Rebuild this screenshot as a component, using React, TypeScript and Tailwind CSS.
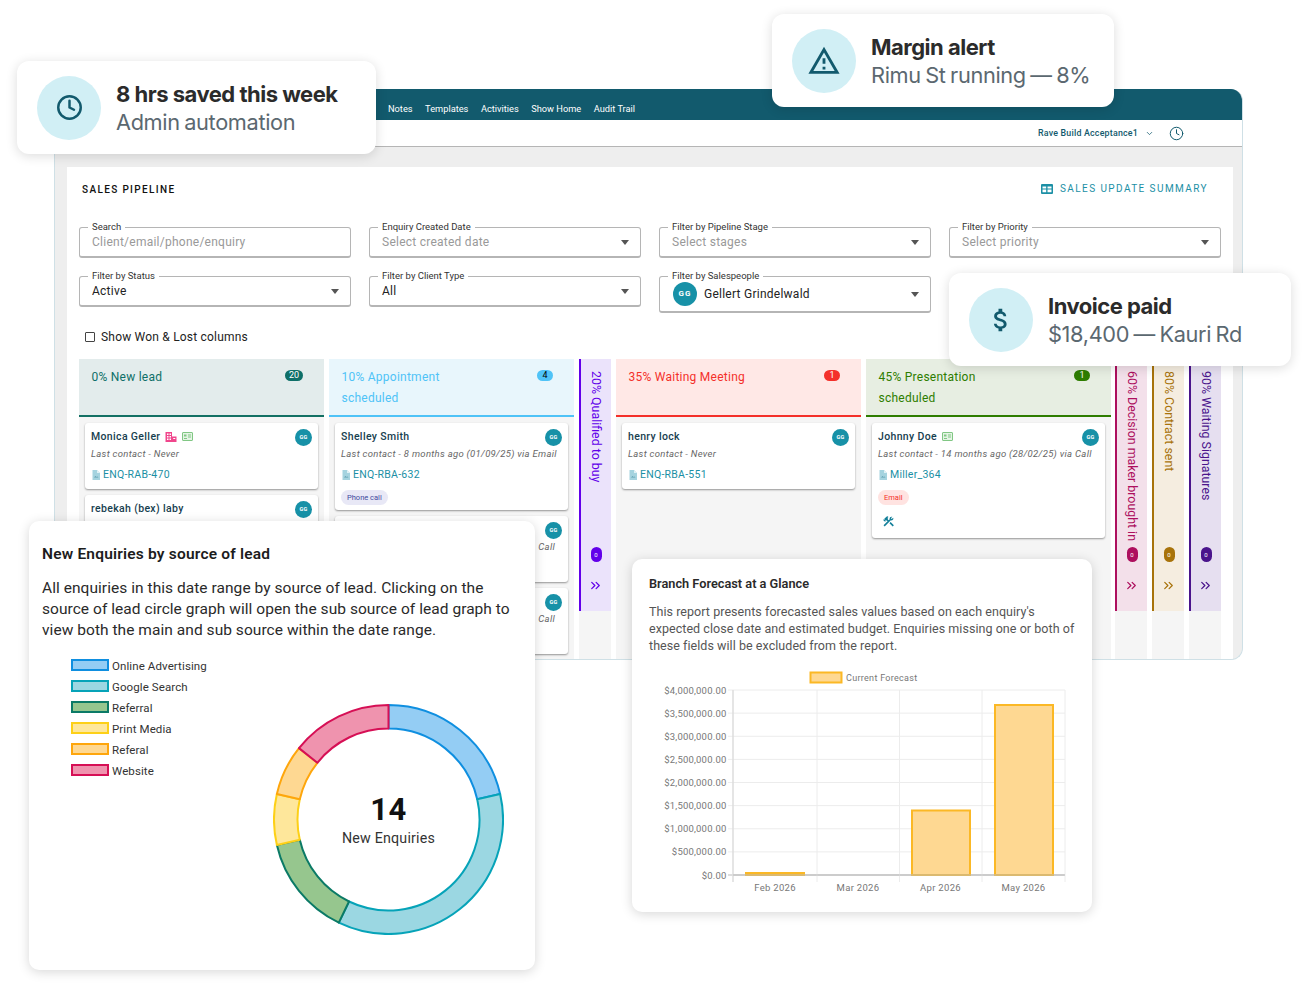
import React from "react";
import { Clock, ChevronDown, ChevronsRight } from "lucide-react";
import { MdOutlineWarningAmber, MdAttachMoney, MdConstruction } from "react-icons/md";

const F = { fontFamily: '"Roboto", "Liberation Sans", sans-serif' };

function Toast({ cls, icon, title, sub }: { cls: string; icon: React.ReactNode; title: string; sub: string }) {
  return (
    <div className={`absolute z-20 flex items-center h-[93px] bg-white rounded-[12px] shadow-[0_2px_12px_rgba(0,0,0,0.14)] pl-[20px] gap-[15px] ${cls}`} style={{ fontFamily: '"Inter", sans-serif' }}>
      <div className="w-[64px] h-[64px] rounded-full bg-[#d1eff5] flex items-center justify-center text-[#125a6d] shrink-0">{icon}</div>
      <div>
        <div className="text-[22px] leading-[29px] font-bold tracking-[-0.5px] text-[#2b2b2b]">{title}</div>
        <div className="text-[21.75px] leading-[26px] tracking-[-0.35px] [word-spacing:-1.3px] text-[#5b6870]">{sub}</div>
      </div>
    </div>
  );
}

function Field({ label, value, ph, caret = true, tall }: { label: string; value?: string; ph?: boolean; caret?: boolean; tall?: boolean }) {
  return (
    <div className={`relative border border-[#b5b5b5] border-b-2 rounded-[3px] flex items-center pl-[12px] pr-[11px] ${tall ? "h-[37px] pl-[13px]" : "h-[31px]"}`}>
      <span className="absolute -top-[7px] left-[8px] px-[4px] bg-white text-[9.5px] leading-[11px] text-[#333]">{label}</span>
      {tall && <span className="w-[24px] h-[24px] rounded-full bg-[#1791a7] text-white text-[8px] font-bold tracking-[1px] flex items-center justify-center mr-[7px]">GG</span>}
      <span className={`text-[12px] tracking-[0.25px] flex-1 ${ph ? "text-[#999]" : "text-[#222]"}`}>{value}</span>
      {caret && <span className="w-0 h-0 border-l-[4px] border-r-[4px] border-t-[5px] border-l-transparent border-r-transparent border-t-[#555] mt-[1px]" />}
    </div>
  );
}

function Gg() {
  return <span className="w-[17px] h-[17px] rounded-full bg-[#1791a7] text-white text-[5.5px] font-bold flex items-center justify-center tracking-[0.3px] shrink-0">GG</span>;
}

function BuildingIcon() {
  return (
    <svg width="12" height="10" viewBox="0 0 24 20" fill="#f0468c">
      <path d="M1 0h13v20H1zM14 9h9v11h-9z" />
      <path fill="#fff" d="M4 3h3v3H4zM9 3h3v3H9zM4 8h3v3H4zM9 8h3v3H9zM4 13h3v3H4zM9 13h3v3H9zM16.500 12h4v2h-4z" />
    </svg>
  );
}
function ContactIcon() {
  return (
    <svg width="11" height="9" viewBox="0 0 22 18" fill="#e4f4e4" stroke="#81c784" strokeWidth="2">
      <rect x="1" y="1" width="20" height="16" rx="1" />
      <rect x="4" y="5" width="5" height="4" fill="#81c784" stroke="none" />
      <path d="M4 13h6M12 6h6M12 10h6" fill="none" />
    </svg>
  );
}
function DocIcon() {
  return (
    <svg width="8" height="10" viewBox="0 0 16 20" fill="#a5d3df" className="shrink-0">
      <path d="M1 0h9l6 6v14H1z" />
      <path d="M10 0l6 6h-6z" fill="#e0f1f5" />
      <path d="M4 15l3-3 2 2 2-1 2 2z" fill="#5f9fb0" />
    </svg>
  );
}

function PCard({ name, icons, last, ref_, tag, tool, h }: { name: string; icons?: React.ReactNode; last?: string; ref_?: string; tag?: React.ReactNode; tool?: boolean; h?: string }) {
  return (
    <div className={`relative bg-white rounded-[3px] shadow-[0_1px_2px_rgba(0,0,0,0.4)] px-[6px] pt-[6px] shrink-0 ${h ?? "h-[66px]"}`}>
      <div className="flex items-center h-[15px] pr-[20px] gap-[5px]">
        <span className="text-[10.5px] font-medium tracking-[0.35px] text-[#17404f]">{name}</span>
        {icons}
      </div>
      <span className="absolute top-[6px] right-[6px]"><Gg /></span>
      {last && <div className="mt-[3px] text-[9.5px] leading-[14px] italic tracking-[0.3px] text-[#666] whitespace-nowrap">{last}</div>}
      {ref_ && (
        <div className="mt-[7px] flex items-center gap-[3px] pl-[1px] text-[10.5px] leading-[14px] tracking-[0.25px] text-[#1b8fa5]">
          <DocIcon />{ref_}
        </div>
      )}
      {tag && <div className="mt-[1px]">{tag}</div>}
      {tool && <div className="mt-[8px] pl-[4px] text-[#137f99]"><MdConstruction size={13} /></div>}
    </div>
  );
}

function CutCard() {
  return (
    <div className="relative bg-white rounded-[3px] shadow-[0_1px_2px_rgba(0,0,0,0.4)] shrink-0 h-[66px]">
      <span className="absolute top-[6px] right-[6px]"><Gg /></span>
      <div className="absolute top-[24px] right-[13px] text-[9.5px] leading-[14px] italic tracking-[0.3px] text-[#666]">Call</div>
    </div>
  );
}

function WideCol({ title, count, head, text, line, badge, badgeText, children }: { title: React.ReactNode; count: string; head: string; text: string; line: string; badge: string; badgeText: string; children?: React.ReactNode }) {
  return (
    <div className="w-[245px] shrink-0 bg-[#f5f5f5] flex flex-col">
      <div className={`h-[58px] shrink-0 border-b-2 pl-[12.5px] pr-[21px] pt-[8px] flex justify-between items-start ${head} ${line}`}>
        <div className={`text-[12px] leading-[21px] tracking-[0.25px] ${text}`}>{title}</div>
        <span className={`mt-[3px] min-w-[16px] h-[11px] px-[4px] rounded-full text-[9px] leading-[11px] text-center ${badge} ${badgeText}`}>{count}</span>
      </div>
      <div className="px-[6px] pt-[6px] flex flex-col gap-[6px]">{children}</div>
    </div>
  );
}

function NarrowCol({ title, bg, text, line, badge }: { title: string; bg: string; text: string; line: string; badge: string }) {
  return (
    <div className="w-[32px] shrink-0 bg-[#f5f5f5]">
      <div className={`h-[252px] border-l-2 flex flex-col items-center pt-[12px] ${bg} ${line}`}>
        <div className={`text-[12.4px] leading-[16px] whitespace-nowrap h-[172px] [writing-mode:vertical-rl] ${text}`}>{title}</div>
        <span className={`mt-[4px] w-[11px] h-[15px] rounded-full text-white text-[6px] flex items-center justify-center ${badge}`}>0</span>
        <ChevronsRight size={15} strokeWidth={2} className={`mt-[16px] -ml-[1px] ${text}`} />
      </div>
    </div>
  );
}

function Donut() {
  const cx = 115.5, cy = 115.5, R = 114.5, r = 91;
  const segs = [
    [3, "#94cdf4", "#0f8fe0"],
    [5, "#9bd7e2", "#06a3b8"],
    [2, "#96c68e", "#0b7a66"],
    [1, "#fee79b", "#fdd017"],
    [1, "#fed892", "#fea60c"],
    [2, "#ef93ae", "#d60f55"],
  ] as const;
  let a = 0;
  const p = (rad: number, deg: number) => {
    const t = (deg * Math.PI) / 180;
    return `${(cx + rad * Math.sin(t)).toFixed(2)} ${(cy - rad * Math.cos(t)).toFixed(2)}`;
  };
  return (
    <svg width="231" height="231" viewBox="0 0 231 231">
      {segs.map(([v, f, s], i) => {
        const a0 = a, a1 = a + (v / 14) * 360;
        a = a1;
        const large = a1 - a0 > 180 ? 1 : 0;
        return <path key={i} fill={f} stroke={s} strokeWidth="2" strokeLinejoin="round" d={`M${p(R, a0)} A${R} ${R} 0 ${large} 1 ${p(R, a1)} L${p(r, a1)} A${r} ${r} 0 ${large} 0 ${p(r, a0)} Z`} />;
      })}
    </svg>
  );
}

function Chart() {
  const ticks = ["$4,000,000.00", "$3,500,000.00", "$3,000,000.00", "$2,500,000.00", "$2,000,000.00", "$1,500,000.00", "$1,000,000.00", "$500,000.00", "$0.00"];
  const xs = [101, 185, 267.5, 350, 433];
  const top = 23, base = 208;
  const months = [["Feb 2026", 143], ["Mar 2026", 226], ["Apr 2026", 308.5], ["May 2026", 391.5]] as const;
  const bars = [[114, 206, 58], [280, 143.5, 58], [363, 38, 58]];
  return (
    <svg width="460" height="240" viewBox="0 0 460 240" style={F}>
      <rect x="178.5" y="5.5" width="31" height="10" fill="#fed892" stroke="#fbb825" strokeWidth="2" />
      <text x="214" y="14" fontSize="9" letterSpacing="0.3" fill="#777">Current Forecast</text>
      {ticks.map((t, i) => {
        const y = top + (i * (base - top)) / 8;
        return (
          <g key={t}>
            <line x1={96} x2={433} y1={y} y2={y} stroke={i === 8 ? "#bbb" : "#ececec"} />
            <text x="94.500" y={y + 3.5} fontSize="9.5" textAnchor="end" letterSpacing="0.2" fill="#777">{t}</text>
          </g>
        );
      })}
      {xs.map((x, i) => <line key={x} x1={x} x2={x} y1={top} y2={base + 7} stroke={i === 0 ? "#ddd" : "#ececec"} strokeWidth={i === 0 ? 1.5 : 1} />)}
      {bars.map(([x, y, w]) => <rect key={x} x={x} y={y} width={w} height={base - y} fill="#fed892" stroke="#fbb825" strokeWidth="2" />)}
      <line x1={101} x2={433} y1={base} y2={base} stroke="#bbb" />
      {months.map(([m, x]) => <text key={m} x={x} y="224" fontSize="9.5" textAnchor="middle" letterSpacing="0.3" fill="#777">{m}</text>)}
    </svg>
  );
}

export default function App() {
  const legend = [
    ["Online Advertising", "bg-[#94cdf4] border-[#0f8fe0]"],
    ["Google Search", "bg-[#9bd7e2] border-[#06a3b8]"],
    ["Referral", "bg-[#96c68e] border-[#0b7a66]"],
    ["Print Media", "bg-[#fee79b] border-[#fdd017]"],
    ["Referal", "bg-[#fed892] border-[#fea60c]"],
    ["Website", "bg-[#ef93ae] border-[#d60f55]"],
  ];
  return (
    <div className="relative w-[1308px] h-[984px] bg-white overflow-hidden pt-[89px] pl-[54px]" style={F}>
      {/* App window */}
      <div className="w-[1189px] h-[571px] bg-[#eeeeee] rounded-[12px] overflow-hidden border-l border-r border-b border-[#cfe0e6] flex flex-col">
        <div className="h-[31px] shrink-0 bg-[#125a6d] flex items-center pl-[333px] gap-[12.5px] text-white text-[9.25px] pt-[8px]">
          <span>Notes</span><span>Templates</span><span>Activities</span><span>Show Home</span><span>Audit Trail</span>
        </div>
        <div className="h-[27px] shrink-0 bg-white border-b border-[#b5b5b5] flex items-center justify-end pt-[1px] pr-[58px] text-[#125a6d]">
          <span className="text-[8.85px] font-medium tracking-[0.2px]">Rave Build Acceptance1</span>
          <ChevronDown size={9} className="ml-[7px]" />
          <Clock size={15} strokeWidth={1.6} className="ml-[15px]" />
        </div>
        <div className="flex-1 min-h-0 pt-[20px] pl-[12px] pr-[9px]">
          <div className="bg-white h-full overflow-hidden px-[12px]">
            <div className="h-[60px] flex items-start justify-between pl-[3px] pr-[13px] pt-[15px]">
              <span className="text-[10px] leading-[13px] font-medium tracking-[1.35px] text-[#111] mt-[1px]">SALES PIPELINE</span>
              <span className="flex items-center gap-[7px] text-[10px] leading-[13px] tracking-[1.42px] text-[#1b8fa5]">
                <svg width="12" height="10" viewBox="0 0 12 10" fill="#1b8fa5"><path d="M1 0h10a1 1 0 0 1 1 1v8a1 1 0 0 1-1 1H1a1 1 0 0 1-1-1V1a1 1 0 0 1 1-1zm.5 2.500v2h3.700v-2zm5 0v2h4v-2zm-5 3v2.800h3.700V5.500zm5 0v2.800h4V5.500z"/></svg>
                SALES UPDATE SUMMARY
              </span>
            </div>
            <div className="grid grid-cols-4 gap-x-[18px] gap-y-[18px] items-start">
              <Field label="Search" value="Client/email/phone/enquiry" ph caret={false} />
              <Field label="Enquiry Created Date" value="Select created date" ph />
              <Field label="Filter by Pipeline Stage" value="Select stages" ph />
              <Field label="Filter by Priority" value="Select priority" ph />
              <Field label="Filter by Status" value="Active" />
              <Field label="Filter by Client Type" value="All" />
              <Field label="Filter by Salespeople" value="Gellert Grindelwald" tall />
            </div>
            <div className="mt-[17px] h-[14px] flex items-center pl-[6px] gap-[6px] text-[12px] tracking-[0.2px] text-[#222]">
              <span className="w-[10px] h-[10px] border border-[#444] rounded-[1px]" />
              Show Won &amp; Lost columns
            </div>
            <div className="mt-[15px] flex h-[310px]">
              <WideCol title="0% New lead" count="20" head="bg-[#e3ecec]" text="text-[#0e6f68]" line="border-[#137063]" badge="bg-[#0e6f68]" badgeText="text-white">
                <PCard name="Monica Geller" icons={<span className="flex items-center gap-[5px]"><BuildingIcon /><ContactIcon /></span>} last="Last contact - Never" ref_="ENQ-RAB-470" />
                <PCard name="rebekah (bex) laby" />
              </WideCol>
              <div className="w-[5px] shrink-0" />
              <WideCol title={<>10% Appointment<br />scheduled</>} count="4" head="bg-[#e8f6fc]" text="text-[#4fc3f7]" line="border-[#4fc3f7]" badge="bg-[#4fc3f7]" badgeText="text-black">
                <PCard name="Shelley Smith" last="Last contact - 8 months ago (01/09/25) via Email" ref_="ENQ-RBA-632" h="h-[87px]" tag={<span className="inline-block h-[15px] px-[6px] rounded-full bg-[#e8e8f6] text-[#3f4a9e] text-[7.5px] leading-[15px]">Phone call</span>} />
                <CutCard />
                <CutCard />
              </WideCol>
              <div className="w-[5px] shrink-0" />
              <NarrowCol title="20% Qualified to buy" bg="bg-[#ebe3fb]" text="text-[#6200ea]" line="border-[#6200ea]" badge="bg-[#6200ea]" />
              <div className="w-[5px] shrink-0" />
              <WideCol title="35% Waiting Meeting" count="1" head="bg-[#ffe8e6]" text="text-[#f4302a]" line="border-[#f4302a]" badge="bg-[#f4302a]" badgeText="text-white">
                <PCard name="henry lock" last="Last contact - Never" ref_="ENQ-RBA-551" />
              </WideCol>
              <div className="w-[5px] shrink-0" />
              <WideCol title={<>45% Presentation<br />scheduled</>} count="1" head="bg-[#e7eee2]" text="text-[#2e7d00]" line="border-[#2e7d00]" badge="bg-[#2e7d00]" badgeText="text-white">
                <PCard name="Johnny Doe" icons={<ContactIcon />} last="Last contact - 14 months ago (28/02/25) via Call" ref_="Miller_364" h="h-[115px]" tag={<span className="inline-block h-[15px] px-[6px] rounded-full bg-[#ffe3e1] text-[#f4302a] text-[7.5px] leading-[15px]">Email</span>} tool />
              </WideCol>
              <div className="w-[4px] shrink-0" />
              <NarrowCol title="60% Decision maker brought in" bg="bg-[#f3e0ea]" text="text-[#ad0f5e]" line="border-[#ad0f5e]" badge="bg-[#ad0f5e]" />
              <div className="w-[5px] shrink-0" />
              <NarrowCol title="80% Contract sent" bg="bg-[#f5ede0]" text="text-[#a8730b]" line="border-[#a8730b]" badge="bg-[#a8730b]" />
              <div className="w-[5px] shrink-0" />
              <NarrowCol title="90% Waiting Signatures" bg="bg-[#e6dff0]" text="text-[#4a148c]" line="border-[#4a148c]" badge="bg-[#4a148c]" />
            </div>
          </div>
        </div>
      </div>

      <Toast cls="left-[17px] top-[61px] w-[359px]" icon={<Clock size={27} strokeWidth={2.2} />} title="8 hrs saved this week" sub="Admin automation" />
      <Toast cls="left-[772px] top-[14px] w-[342px]" icon={<MdOutlineWarningAmber size={34} />} title="Margin alert" sub="Rimu St running — 8%" />
      <Toast cls="left-[949px] top-[273px] w-[342px]" icon={<MdAttachMoney size={30} />} title="Invoice paid" sub="$18,400 — Kauri Rd" />

      {/* Enquiries card */}
      <div className="absolute z-10 left-[29px] top-[521px] w-[506px] h-[449px] bg-white rounded-[10px] shadow-[0_2px_12px_rgba(0,0,0,0.16)] pl-[13px] pr-[10px] pt-[23px]">
        <div className="text-[15.5px] leading-[20px] font-semibold tracking-[0.2px] text-[#1c1c1c]">New Enquiries by source of lead</div>
        <p className="mt-[14px] text-[15.5px] leading-[21px] tracking-[0.05px] text-[#2a2a2a]">All enquiries in this date range by source of lead. Clicking on the source of lead circle graph will open the sub source of lead graph to view both the main and sub source within the date range.</p>
        <div className="relative mt-[15px] pl-[29px]">
          {legend.map(([l, c]) => (
            <div key={l} className="flex items-center h-[21px] gap-[3px] text-[11.5px] tracking-[0.1px] text-[#333]">
              <span className={`w-[38px] h-[12px] -mt-[3px] border-2 ${c}`} />{l}
            </div>
          ))}
          <div className="absolute left-[231px] top-[48px]">
            <Donut />
            <div className="absolute inset-0 flex flex-col items-center justify-center pt-[2px]">
              <span className="text-[31px] leading-[36px] font-bold tracking-[0.5px] text-[#111]">14</span>
              <span className="text-[14.25px] leading-[21px] tracking-[0.2px] text-[#333]">New Enquiries</span>
            </div>
          </div>
        </div>
      </div>

      {/* Forecast card */}
      <div className="absolute z-10 left-[632px] top-[559px] w-[460px] h-[353px] bg-white rounded-[10px] shadow-[0_2px_12px_rgba(0,0,0,0.16)] pt-[16px]">
        <div className="px-[17px]">
          <div className="text-[12.75px] leading-[18px] font-semibold text-[#2a2a2a]">Branch Forecast at a Glance</div>
          <p className="mt-[10px] text-[12.5px] leading-[17px] tracking-[0.05px] text-[#555]">This report presents forecasted sales values based on each enquiry's expected close date and estimated budget. Enquiries missing one or both of these fields will be excluded from the report.</p>
        </div>
        <div className="mt-[13px]"><Chart /></div>
      </div>
    </div>
  );
}
